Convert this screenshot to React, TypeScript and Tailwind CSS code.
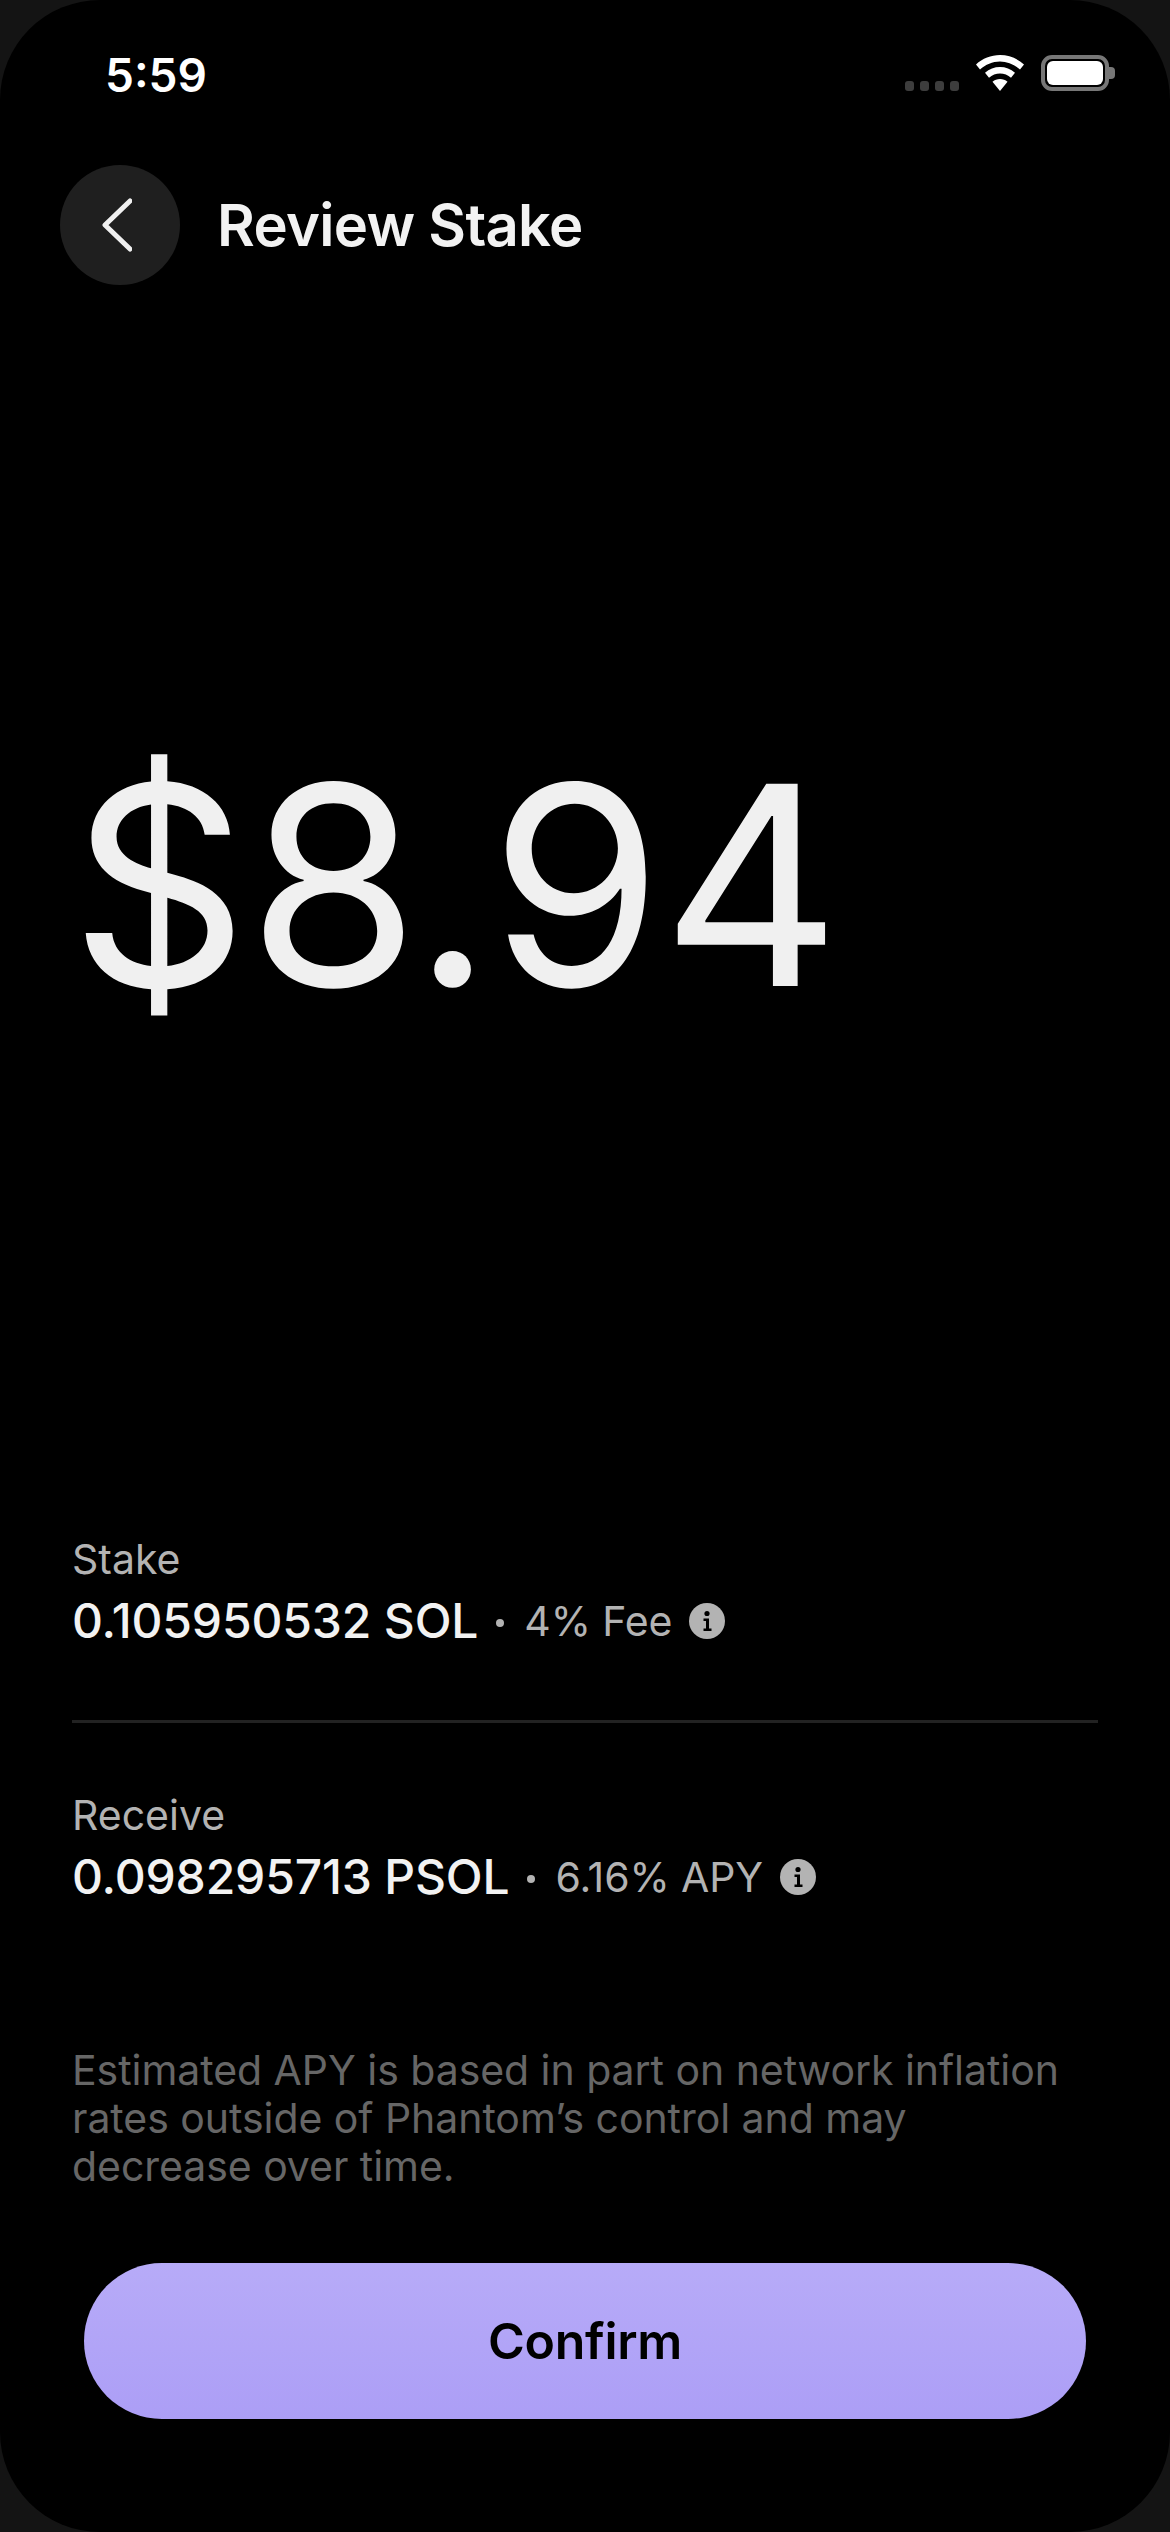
function InfoIcon() {
  return (
    <svg width="36" height="36" viewBox="0 0 36 36" className="shrink-0">
      <circle cx="18" cy="18" r="18" fill="#b3b3b3" />
      <circle cx="18" cy="10.5" r="2.6" fill="#000" />
      <path d="M14.5 15.5h5.5v10h2.5v2.5h-8v-2.5h2.5v-7.5h-2.5z" fill="#000" />
    </svg>
  )
}

function Wifi() {
  return (
    <svg width="48" height="36" viewBox="0 0 48 36">
      <path d="M24 0c9 0 17.500 3.500 24 9.500l-4 5C38.500 9.500 31.500 6.500 24 6.500S9.500 9.500 4 14.500l-4-5C6.500 3.500 15 0 24 0z" fill="#fff" />
      <path d="M24 12c5.500 0 10.800 2 15 5.800l-4 5C32 20 28 18.500 24 18.500s-8 1.500-11 4.300l-4-5C13.200 14 18.500 12 24 12z" fill="#fff" />
      <path d="M24 24c2.800 0 5.500 1 7.500 2.800L24 36l-7.500-9.200C18.500 25 21.200 24 24 24z" fill="#fff" />
    </svg>
  )
}

function StatusBar() {
  return (
    <div className="h-[92px] pt-[52px] pl-[105px] pr-[55px] flex justify-between items-start">
      <span className="text-[46px] leading-[46px] font-semibold text-white">5:59</span>
      <div className="flex items-end mt-[3px]">
        <div className="flex gap-[6px] mr-[17px]">
          {[0, 1, 2, 3].map((i) => (
            <span key={i} className="w-[9px] h-[10px] rounded-[3px] bg-[#3d3d3d]" />
          ))}
        </div>
        <Wifi />
        <div className="flex items-center ml-[17px]">
          <div className="w-[68px] h-[36px] rounded-[11px] border-[4px] border-[#777777] p-[2px]">
            <div className="w-full h-full rounded-[6px] bg-white" />
          </div>
          <div className="w-[6px] h-[12px] rounded-r-[4px] bg-[#777777]" />
        </div>
      </div>
    </div>
  )
}

function Row({ label, value, note, className }: { label: string; value: string; note: string; className?: string }) {
  return (
    <div className={className}>
      <div className="text-[41px] leading-[48px] text-[#b3b3b3]">{label}</div>
      <div className="flex items-center mt-[12px] h-[52px]">
        <span className="text-[48px] leading-[52px] font-medium tracking-[-0.15px] text-[#f2f2f2]">{value}</span>
        <span className="w-[8px] h-[8px] rounded-full bg-[#b3b3b3] ml-[18px] mr-[20px] mt-[4px]" />
        <span className="text-[41px] leading-[52px] tracking-[-0.1px] text-[#b3b3b3] mr-[17px]">{note}</span>
        <InfoIcon />
      </div>
    </div>
  )
}

export default function App() {
  return (
    <div className="w-[1170px] h-[2532px] bg-[#141414] font-['Inter',sans-serif]">
      <div className="w-full h-full bg-black rounded-[100px] flex flex-col overflow-hidden">
        <StatusBar />

        <div className="flex items-center mt-[73px] pl-[60px]">
          <button className="w-[120px] h-[120px] rounded-full bg-[#1f1f1f] flex items-center justify-center">
            <svg width="30" height="54" viewBox="0 0 30 54" fill="none" className="mr-[6px]">
              <path d="M28 3 3 27l25 24" stroke="#f0f0f0" strokeWidth="5" strokeLinecap="round" strokeLinejoin="round" />
            </svg>
          </button>
          <h1 className="ml-[37px] text-[58px] leading-[70px] font-semibold tracking-[-0.7px] text-[#f2f2f2]">Review Stake</h1>
        </div>

        <div className="mt-[425px] pl-[70px] text-[278px] leading-[350px] font-normal tracking-[-0.8px] text-[#f0f0f0]">$8.94</div>

        <div className="mt-[475px] px-[72px]">
          <Row label="Stake" value="0.105950532 SOL" note="4% Fee" />
          <div className="h-[3px] bg-[#222222] mt-[73px]" />
          <Row label="Receive" value="0.098295713 PSOL" note="6.16% APY" className="mt-[68px]" />
          <p className="mt-[143px] text-[41px] leading-[48px] tracking-[-0.05px] text-[#666666]">
            Estimated APY is based in part on network inflation
            <br />
            rates outside of Phantom’s control and may
            <br />
            decrease over time.
          </p>
        </div>

        <button className="mt-[73px] mx-[84px] h-[156px] rounded-full bg-gradient-to-b from-[#b7abf8] to-[#ac9ef6] text-[50px] font-semibold tracking-[-0.3px] text-black">
          Confirm
        </button>
      </div>
    </div>
  )
}
